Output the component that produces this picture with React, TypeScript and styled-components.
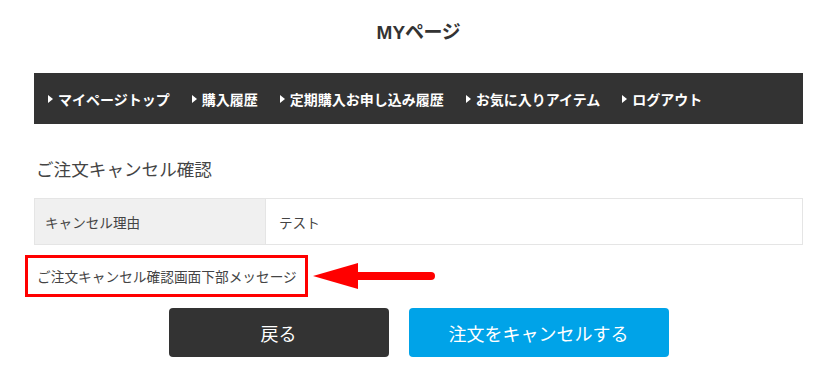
import React from "react";
import styled, { createGlobalStyle } from "styled-components";

const Global = createGlobalStyle`
  html, body { margin: 0; padding: 0; background: #ffffff; }
  body {
    font-family: "Liberation Sans", "Noto Sans CJK JP", sans-serif;
    color: #333333;
  }
`;

const Page = styled.div`
  width: 769px;
  margin-left: 34px;
`;

const Title = styled.h1`
  margin: 0;
  padding-top: 20px;
  height: 73px;
  box-sizing: border-box;
  text-align: center;
  font-size: 19px;
  line-height: 26px;
  font-weight: bold;
  color: #333333;
  font-feature-settings: "palt";
`;

const Nav = styled.nav`
  display: flex;
  align-items: center;
  gap: 22px;
  height: 51px;
  padding-left: 14px;
  background: #333333;
`;

const NavItem = styled.a`
  display: flex;
  align-items: center;
  color: #ffffff;
  font-size: 14px;
  font-weight: bold;
  text-decoration: none;
  white-space: nowrap;
  font-family: "Noto Sans CJK JP", sans-serif;
  &::before {
    content: "";
    width: 0;
    height: 0;
    border-top: 4px solid transparent;
    border-bottom: 4px solid transparent;
    border-left: 5px solid #ffffff;
    margin-right: 5px;
  }
`;

const Heading = styled.h2`
  margin: 32px 0 16px 2px;
  font-size: 17.6px;
  line-height: 26px;
  font-weight: normal;
  color: #444444;
  font-family: "Noto Sans CJK JP", sans-serif;
`;

const Table = styled.table`
  width: 100%;
  border-collapse: collapse;
  font-family: "Noto Sans CJK JP", sans-serif;
  font-size: 13.6px;
  color: #444444;
`;

const Th = styled.th`
  width: 220px;
  height: 45px;
  padding: 0 0 0 10px;
  text-align: left;
  font-weight: normal;
  background: #f0f0f0;
  border: 1px solid #e5e5e5;
`;

const Td = styled.td`
  padding: 0 0 0 13px;
  border: 1px solid #e5e5e5;
`;

const NoteRow = styled.div`
  display: flex;
  align-items: center;
  margin: 10px 0 0 -9px;
`;

const NoteBox = styled.div`
  display: flex;
  align-items: center;
  height: 42px;
  width: 283px;
  box-sizing: border-box;
  border: 3px solid #ff0000;
  padding-left: 9px;
  font-family: "Noto Sans CJK JP", sans-serif;
  font-size: 13.7px;
  color: #444444;
  white-space: nowrap;
`;

const Arrow = styled.svg`
  display: block;
  flex: none;
`;

const Buttons = styled.div`
  display: flex;
  justify-content: center;
  gap: 20px;
  margin-top: 11px;
`;

const Button = styled.button<{ $variant: "dark" | "blue" }>`
  width: ${(p) => (p.$variant === "dark" ? "220px" : "260px")};
  height: 49px;
  border: none;
  border-radius: 4px;
  background: ${(p) => (p.$variant === "dark" ? "#333333" : "#00a3e8")};
  color: #ffffff;
  font-family: "Noto Sans CJK JP", sans-serif;
  font-size: 18px;
  cursor: pointer;
  padding: 0;
`;

const navItems = [
  "マイページトップ",
  "購入履歴",
  "定期購入お申し込み履歴",
  "お気に入りアイテム",
  "ログアウト",
];

export default function App() {
  return (
    <>
      <Global />
      <Page>
        <Title>MYページ</Title>
        <Nav>
          {navItems.map((t) => (
            <NavItem key={t} href="#">
              {t}
            </NavItem>
          ))}
        </Nav>
        <Heading>ご注文キャンセル確認</Heading>
        <Table>
          <tbody>
            <tr>
              <Th>キャンセル理由</Th>
              <Td>テスト</Td>
            </tr>
          </tbody>
        </Table>
        <NoteRow>
          <NoteBox>ご注文キャンセル確認画面下部メッセージ</NoteBox>
          <Arrow width="132" height="32" viewBox="0 0 132 32">
            <path d="M5 16 L50 3 L50 29 Z" fill="#ff0000" />
            <line
              x1="48"
              y1="16"
              x2="123"
              y2="16"
              stroke="#ff0000"
              strokeWidth="8"
              strokeLinecap="round"
            />
          </Arrow>
        </NoteRow>
        <Buttons>
          <Button $variant="dark">戻る</Button>
          <Button $variant="blue">注文をキャンセルする</Button>
        </Buttons>
      </Page>
    </>
  );
}
